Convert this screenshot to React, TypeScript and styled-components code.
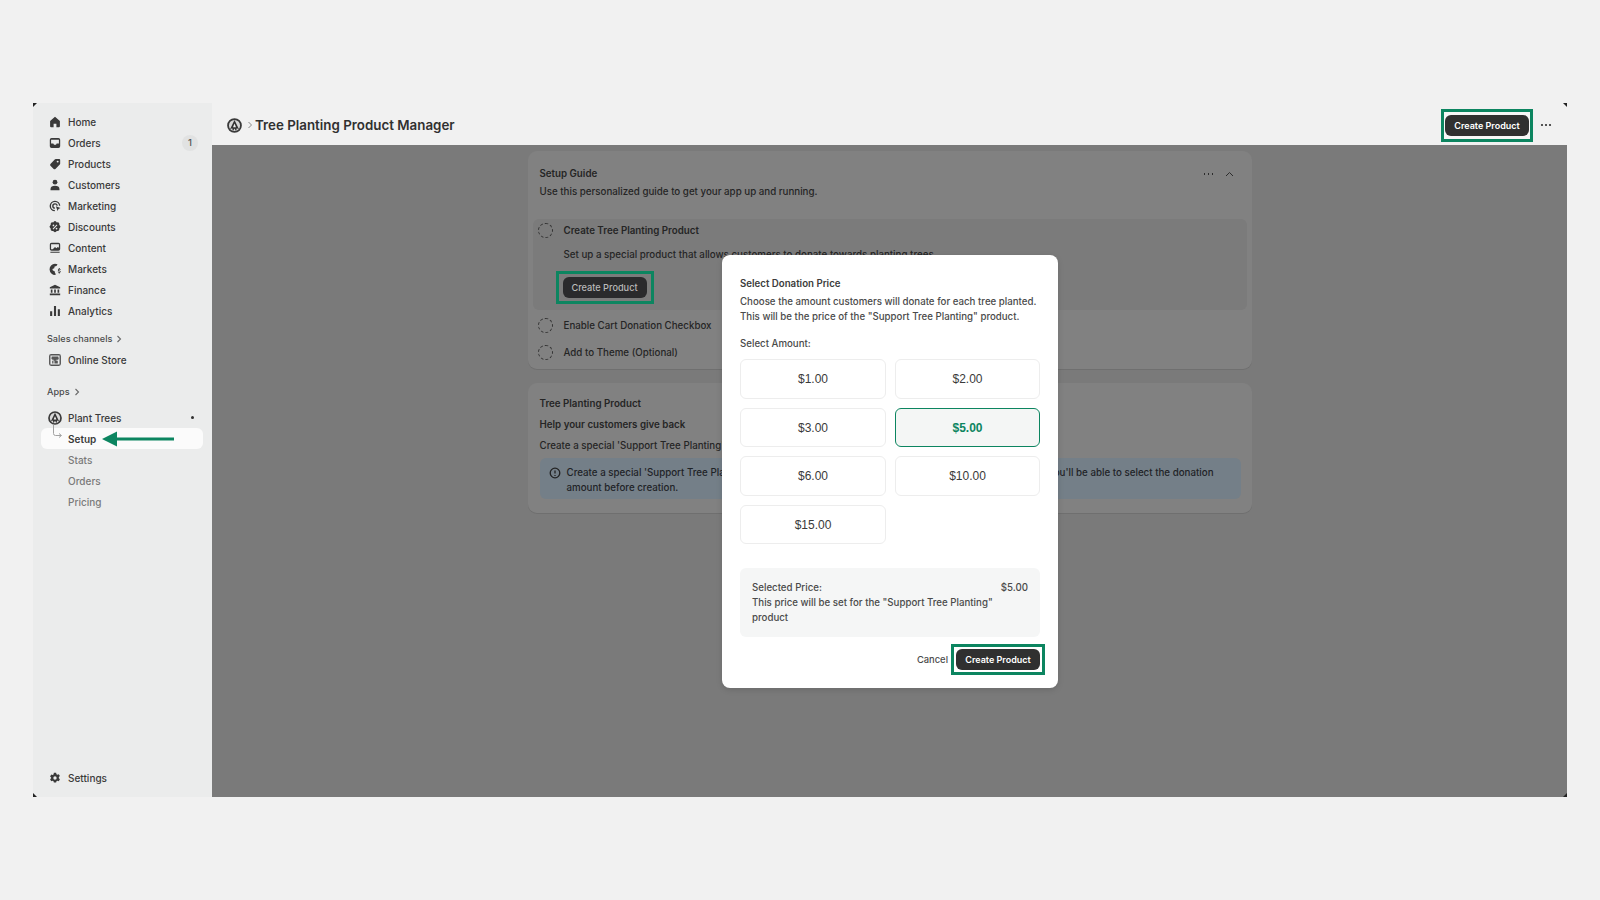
import React from "react";
import styled, { createGlobalStyle } from "styled-components";

const GREEN = "#0c8560";

const Global = createGlobalStyle`
  html, body { margin: 0; padding: 0; background: #f1f1f1; }
  body { font-family: Inter, "Liberation Sans", sans-serif; color: #303030; -webkit-font-smoothing: antialiased; }
  #root { height: 900px; overflow: hidden; }
`;

const Page = styled.div`
  box-sizing: border-box;
  height: 900px;
  padding: 103px 33px 0;
`;
const Frame = styled.div`
  position: relative;
  display: flex;
  height: 694px;
  box-shadow: inset 0 1px 0 #e4e4e4;
`;
const Corner = styled.span<{ $pos: "tl" | "tr" | "bl" | "br" }>`
  position: absolute;
  z-index: 5;
  width: 0;
  height: 0;
  ${(p) => (p.$pos[0] === "t" ? "top: 0;" : "bottom: 0;")}
  ${(p) => (p.$pos[1] === "l" ? "left: 0;" : "right: 0;")}
  border-style: solid;
  border-width: 2px;
  border-color: ${(p) =>
    p.$pos === "tl"
      ? "#222 transparent transparent #222"
      : p.$pos === "tr"
      ? "#222 #222 transparent transparent"
      : p.$pos === "bl"
      ? "transparent transparent #222 #222"
      : "transparent #222 #222 transparent"};
`;

/* ---------- Sidebar ---------- */
const Sidebar = styled.nav`
  box-sizing: border-box;
  width: 179px;
  flex: none;
  background: #ebecec;
  padding: 8px 9px 9px 8px;
  display: flex;
  flex-direction: column;
`;
const NavRow = styled.div<{ $active?: boolean; $sub?: boolean }>`
  position: relative;
  display: flex;
  align-items: center;
  gap: 6px;
  height: 21px;
  flex: none;
  padding: 0 5px 0 7px;
  border-radius: 6px;
  font-size: 10px;
  font-weight: ${(p) => (p.$active ? 600 : 500)};
  color: ${(p) => (p.$sub && !p.$active ? "#7a7a7a" : "#3a3a3a")};
  background: ${(p) => (p.$active ? "#fbfbfb" : "transparent")};
  ${(p) => (p.$sub ? "padding-left: 27px;" : "")}
`;
const NavIcon = styled.svg`
  width: 14px;
  height: 14px;
  flex: none;
  fill: #3a3a3a;
`;
const NavLabel = styled.span`
  flex: 1;
  white-space: nowrap;
`;
const Badge = styled.span`
  width: 16px;
  height: 16px;
  border-radius: 50%;
  background: #e1e2e2;
  color: #555;
  font-size: 9.5px;
  display: flex;
  align-items: center;
  justify-content: center;
`;
const PinDot = styled.span`
  width: 3px;
  height: 3px;
  border-radius: 50%;
  background: #303030;
  margin-right: 4px;
`;
const SectionLabel = styled.div<{ $top: number }>`
  display: flex;
  align-items: center;
  gap: 4px;
  height: 21px;
  flex: none;
  margin-top: ${(p) => p.$top}px;
  padding-left: 6px;
  font-size: 9.1px;
  font-weight: 500;
  color: #4a4a4a;
`;
const TinyChevron = styled.svg`
  width: 6px;
  height: 8px;
  fill: none;
  stroke: #6a6a6a;
  stroke-width: 1.1;
`;
const Connector = styled.svg`
  position: absolute;
  left: 11px;
  top: -3px;
  width: 16px;
  height: 18px;
  fill: none;
  stroke: #a2a2a2;
  stroke-width: 1;
`;
const ArrowMark = styled.svg`
  position: absolute;
  left: 61px;
  top: 3px;
  width: 73px;
  height: 16px;
`;
const AppsGap = styled.div`
  height: 5px;
  flex: none;
`;
const Push = styled.div`
  flex: 1;
`;

/* ---------- Main ---------- */
const Main = styled.main`
  flex: 1;
  min-width: 0;
  display: flex;
  flex-direction: column;
`;
const Header = styled.header`
  box-sizing: border-box;
  height: 42px;
  flex: none;
  display: flex;
  align-items: center;
  padding: 2px 15px 0 15px;
  background: #f1f1f1;
`;
const LogoSvg = styled.svg<{ $size: number }>`
  width: ${(p) => p.$size}px;
  height: ${(p) => p.$size}px;
  flex: none;
`;
const Crumb = styled.svg`
  width: 6px;
  height: 8px;
  margin: 0 2px 0 5px;
  fill: none;
  stroke: #8a8a8a;
  stroke-width: 1;
`;
const PageTitle = styled.h1`
  flex: 1;
  margin: 0;
  font-size: 13.35px;
  font-weight: 600;
  color: #303030;
  white-space: nowrap;
`;
const Highlight = styled.span<{ $px: number; $py: number; $bg?: string }>`
  display: inline-flex;
  border: 3px solid ${GREEN};
  padding: ${(p) => p.$py}px ${(p) => p.$px}px;
  background: ${(p) => p.$bg || "transparent"};
`;
const DarkButton = styled.button<{ $dim?: boolean }>`
  width: 84px;
  height: 21px;
  padding: 0;
  border: 0;
  border-radius: 6px;
  background: ${(p) => (p.$dim ? "#2a2a2c" : "#303030")};
  color: ${(p) => (p.$dim ? "#b9b9b9" : "#ffffff")};
  font: ${(p) => (p.$dim ? 500 : 600)} ${(p) => (p.$dim ? 9.2 : 9)}px Inter, sans-serif;
  white-space: nowrap;
`;
const HeaderDots = styled.svg`
  width: 12px;
  height: 4px;
  margin-left: 7px;
  fill: #303030;
`;
const Overlay = styled.div`
  position: relative;
  flex: 1;
  background: #7a7a7a;
  padding-top: 6px;
  display: flex;
  flex-direction: column;
  align-items: center;
`;
const Card = styled.section<{ $h: number; $top?: number; $pad: number }>`
  box-sizing: border-box;
  width: 724px;
  height: ${(p) => p.$h}px;
  margin-top: ${(p) => p.$top || 0}px;
  flex: none;
  background: #818181;
  border-radius: 9px;
  box-shadow: 0 1px 0 #6f6f6f;
  padding: ${(p) => p.$pad}px 12px 0;
  font-size: 9.75px;
  font-weight: 450;
  color: #252525;
`;
const CardHead = styled.div`
  display: flex;
  align-items: center;
`;
const CardTitle = styled.div<{ $top?: number }>`
  flex: 1;
  font-weight: 600;
  line-height: 18px;
  margin-top: ${(p) => p.$top || 0}px;
`;
const CardText = styled.div<{ $top?: number }>`
  line-height: 18px;
  margin-top: ${(p) => p.$top || 0}px;
  white-space: nowrap;
`;
const GuideTools = styled.svg`
  width: 42px;
  height: 10px;
  margin-right: 1px;
  fill: none;
  stroke: #2c2c2c;
`;
const StepBox = styled.div`
  margin: 18px -7px 0;
  box-sizing: border-box;
  height: 91px;
  border-radius: 6px;
  background: #7b7b7b;
  padding: 0 5px;
`;
const StepRow = styled.div<{ $outer?: boolean }>`
  display: flex;
  align-items: center;
  gap: 11px;
  height: 22px;
  font-weight: ${(p) => (p.$outer ? 500 : 600)};
  ${(p) => (p.$outer ? "margin: 0 -2px;" : "")}
`;
const StepCircle = styled.span`
  box-sizing: border-box;
  width: 15px;
  height: 15px;
  flex: none;
  border-radius: 50%;
  border: 1.2px dashed #333;
`;
const StepBody = styled.div`
  margin: 3px 0 0 26px;
  line-height: 22px;
  white-space: nowrap;
`;
const StepAction = styled.div`
  margin: 5px 0 0 18px;
`;
const Stack = styled.div`
  margin-top: 4px;
  display: flex;
  flex-direction: column;
  gap: 5px;
`;
const Banner = styled.div`
  margin-top: 3px;
  box-sizing: border-box;
  height: 41px;
  margin-right: -1px;
  border-radius: 6px;
  background: #747f88;
  padding: 8px 24px 0 9px;
  display: flex;
  gap: 6px;
  line-height: 14.6px;
  color: #1f2327;
`;
const InfoIcon = styled.svg`
  width: 12px;
  height: 12px;
  flex: none;
  margin-top: 1px;
  fill: none;
  stroke: #222;
  stroke-width: 1.3;
`;

/* ---------- Modal ---------- */
const Modal = styled.div`
  position: absolute;
  left: 510px;
  top: 110px;
  box-sizing: border-box;
  width: 336px;
  height: 433px;
  padding: 21px 18px 0;
  background: #ffffff;
  border-radius: 8px;
  font-size: 9.7px;
  font-weight: 450;
  color: #4a4a4a;
  box-shadow: 0 2px 6px rgba(0, 0, 0, 0.12);
`;
const ModalTitle = styled.div`
  font-weight: 600;
  line-height: 15px;
  color: #3c3c3c;
`;
const ModalDesc = styled.div`
  margin-top: 4px;
  line-height: 14.7px;
  white-space: nowrap;
`;
const ModalLabel = styled.div`
  margin-top: 12px;
  line-height: 15px;
`;
const AmountGrid = styled.div`
  margin-top: 8px;
  display: grid;
  grid-template-columns: 146px 145px;
  gap: 9px;
`;
const Amount = styled.button<{ $selected?: boolean }>`
  box-sizing: border-box;
  height: 39.5px;
  padding: 0;
  border-radius: 6px;
  border: ${(p) => (p.$selected ? `1.6px solid ${GREEN}` : "1px solid #ededed")};
  background: ${(p) => (p.$selected ? "#f4f6f5" : "#ffffff")};
  color: ${(p) => (p.$selected ? GREEN : "#3a3a3a")};
  font: ${(p) => (p.$selected ? 700 : 400)} 12px "Liberation Sans", Arial, sans-serif;
`;
const Summary = styled.div`
  box-sizing: border-box;
  margin-top: 24px;
  height: 69px;
  padding: 12px 12px 0;
  border-radius: 6px;
  background: #f5f6f6;
  line-height: 15px;
`;
const SummaryTop = styled.div`
  display: flex;
  justify-content: space-between;
`;
const SummaryNote = styled.div`
  width: 250px;
`;
const Footer = styled.div`
  margin: 7px -5px 0 0;
  display: flex;
  justify-content: flex-end;
  align-items: center;
  gap: 3px;
`;
const CancelLink = styled.span`
  font-weight: 500;
  font-size: 9.4px;
  color: #4a4a4a;
`;

/* ---------- Icons ---------- */
const Logo = ({ size }: { size: number }) => (
  <LogoSvg $size={size} viewBox="0 0 20 20">
    <circle cx="10" cy="10" r="8.6" fill="#d8d8d8" stroke="#3a3a3a" strokeWidth="2.4" />
    <path d="M10 2.600 16 15l-3-1.500-.8 4-2.200-3.600-2.200 3.600-.8-4L4 15z" fill="#333" />
    <path d="M10 7.400l2 4.800H8z" fill="#f0f0f0" />
  </LogoSvg>
);

const icons: Record<string, React.ReactNode> = {
  home: <path d="M10 2.600 3 8.600V16a1.400 1.400 0 0 0 1.400 1.400H8V12.600h4v4.800h3.600A1.400 1.400 0 0 0 17 16V8.600z" />,
  orders: (
    <path
      fillRule="evenodd"
      d="M5 3h10a2.400 2.400 0 0 1 2.400 2.400v9.200A2.400 2.400 0 0 1 15 17H5a2.400 2.400 0 0 1-2.400-2.400V5.400A2.400 2.400 0 0 1 5 3zm-.6 2.200v5.600h3.200l1 1.800h2.800l1-1.800h3.200V5.200z"
    />
  ),
  products: (
    <path
      fillRule="evenodd"
      d="M11 3h5a1.400 1.400 0 0 1 1.400 1.400v5a2 2 0 0 1-.6 1.400l-6.200 6.200a1.800 1.800 0 0 1-2.500 0l-4.600-4.600a1.800 1.800 0 0 1 0-2.500l6.100-6.300A2 2 0 0 1 11 3zm2.800 2.200a1.400 1.400 0 1 0 0 2.800 1.400 1.400 0 0 0 0-2.800z"
    />
  ),
  customers: (
    <>
      <circle cx="10" cy="6" r="3.400" />
      <path d="M3.600 17.400v-1.800c0-2.800 2.600-4.400 6.400-4.400s6.400 1.600 6.400 4.400v1.800z" />
    </>
  ),
  marketing: (
    <path
      fillRule="evenodd"
      d="M10 2.400a7.600 7.600 0 0 1 7.600 7.400h-1.900A5.700 5.700 0 1 0 9.800 15.700v1.900A7.600 7.600 0 0 1 10 2.400zm0 3.600a4 4 0 0 1 4 3.800h-1.900A2.100 2.100 0 1 0 9.800 12.100V14A4 4 0 0 1 10 6zm1.200 4.400 6.600 2.600-2.800 1.400-1.300 2.800z"
    />
  ),
  discounts: (
    <path
      fillRule="evenodd"
      d="M8.200 2.600a2.400 2.400 0 0 1 3.600 0l.8.8 1.100-.1a2.400 2.400 0 0 1 2.500 2.500l-.1 1.100.8.8a2.400 2.400 0 0 1 0 3.600l-.8.8.1 1.100a2.400 2.400 0 0 1-2.500 2.500l-1.100-.1-.8.8a2.400 2.400 0 0 1-3.600 0l-.8-.8-1.100.1a2.400 2.400 0 0 1-2.500-2.500l.1-1.100-.8-.8a2.400 2.400 0 0 1 0-3.600l.8-.8-.1-1.100a2.400 2.400 0 0 1 2.500-2.500l1.100.1zM12.400 6.600l-5.800 5.800 1 1 5.800-5.800zM7.800 6.600a1.200 1.200 0 1 0 0 2.400 1.200 1.200 0 0 0 0-2.400zm4.400 4.400a1.200 1.200 0 1 0 0 2.400 1.200 1.200 0 0 0 0-2.400z"
    />
  ),
  content: (
    <path
      fillRule="evenodd"
      d="M5 2.600h10A2.400 2.400 0 0 1 17.400 5v6.600A2.400 2.400 0 0 1 15 14H5a2.400 2.400 0 0 1-2.400-2.400V5A2.400 2.400 0 0 1 5 2.600zm-.6 2v7.200h2.400l3.200-3.200 2 1.800 2-2 1.600 1.400V4.600zM3.400 15.200h13.200v1.600H3.400z"
    />
  ),
  markets: (
    <path
      fillRule="evenodd"
      d="M10 2.400c1.300 0 2.500.3 3.600.9l-1.500 2.500-2.600.7-.6 2.400-2.600 1 .6 2.400 2.600.8.6 2.800 1 .8-.5 1.800A7.600 7.600 0 1 1 10 2.400zm5.400 6.200h1.400v1.200c.8.2 1.300.8 1.300 1.500h-1.300c0-.3-.3-.5-.7-.5s-.7.2-.7.5c0 .4.3.5 1 .7 1 .3 1.800.7 1.800 1.700 0 .8-.5 1.400-1.400 1.600v1.200h-1.400v-1.200c-.9-.2-1.500-.8-1.500-1.700h1.300c0 .4.4.7.9.7s.8-.2.8-.6-.4-.6-1.100-.8c-1-.3-1.700-.7-1.700-1.600 0-.7.6-1.300 1.300-1.500z"
    />
  ),
  finance: (
    <path d="M10 2.400 17.400 6v2H2.600V6zM4 9.400h2.400v4.400H4zm4.800 0h2.400v4.400H8.800zm4.800 0H16v4.400h-2.400zM2.600 15h14.800v2.400H2.600z" />
  ),
  analytics: <path d="M3 10.400h3v6.800H3zM8.500 3h3v14.200h-3zM14 7.400h3v9.800h-3z" />,
  store: (
    <path
      fillRule="evenodd"
      fill="#555"
      d="M4.500 1.500h11a3 3 0 0 1 3 3v11a3 3 0 0 1-3 3h-11a3 3 0 0 1-3-3v-11a3 3 0 0 1 3-3zM3.500 3.500v13h13v-13zM5.400 5h9.200l.8 3a1.800 1.800 0 0 1-3 1.200 2.300 2.300 0 0 1-4.800 0 1.800 1.800 0 0 1-2.800-1.200zM6 11h1.800v4H6zm3.200 0h4.800v4H9.200z"
    />
  ),
  settings: (
    <path
      fillRule="evenodd"
      d="M8.400 2.400h3.200l.5 2.100 1.300.7 2-.7 1.600 2.800-1.500 1.400v1.600l1.500 1.400-1.600 2.800-2-.7-1.300.7-.5 2.100H8.400l-.5-2.100-1.300-.7-2 .7-1.600-2.800 1.500-1.400V9.300L3 7.900l1.600-2.800 2 .7 1.300-.7zM10 7.600a2.400 2.400 0 1 0 0 4.800 2.400 2.400 0 0 0 0-4.800z"
    />
  ),
};

const Icon = ({ name }: { name: string }) => <NavIcon viewBox="0 0 20 20">{icons[name]}</NavIcon>;

const Chevron = () => (
  <TinyChevron viewBox="0 0 6 8">
    <path d="M1.500 1 4.500 4 1.500 7" />
  </TinyChevron>
);

const mainNav: [string, string][] = [
  ["home", "Home"],
  ["orders", "Orders"],
  ["products", "Products"],
  ["customers", "Customers"],
  ["marketing", "Marketing"],
  ["discounts", "Discounts"],
  ["content", "Content"],
  ["markets", "Markets"],
  ["finance", "Finance"],
  ["analytics", "Analytics"],
];

const amounts = ["$1.00", "$2.00", "$3.00", "$5.00", "$6.00", "$10.00", "$15.00"];

export default function App() {
  return (
    <>
      <Global />
      <Page>
        <Frame>
          <Corner $pos="tl" />
          <Corner $pos="tr" />
          <Corner $pos="bl" />
          <Corner $pos="br" />
          <Sidebar>
            {mainNav.map(([icon, label]) => (
              <NavRow key={label}>
                <Icon name={icon} />
                <NavLabel>{label}</NavLabel>
                {label === "Orders" && <Badge>1</Badge>}
              </NavRow>
            ))}
            <SectionLabel $top={7}>
              Sales channels <Chevron />
            </SectionLabel>
            <NavRow>
              <Icon name="store" />
              <NavLabel>Online Store</NavLabel>
            </NavRow>
            <SectionLabel $top={11}>
              Apps <Chevron />
            </SectionLabel>
            <AppsGap />
            <NavRow>
              <Logo size={14} />
              <NavLabel>Plant Trees</NavLabel>
              <PinDot />
            </NavRow>
            <NavRow $sub $active>
              <Connector viewBox="0 0 16 18">
                <path d="M1.500 0v8.500a2 2 0 0 0 2 2H9M7 8.500l2.500 2-2.500 2" />
              </Connector>
              Setup
              <ArrowMark viewBox="0 0 73 16">
                <path d="M0 8 15 .5v6h57v3H15v6z" fill={GREEN} />
              </ArrowMark>
            </NavRow>
            <NavRow $sub>Stats</NavRow>
            <NavRow $sub>Orders</NavRow>
            <NavRow $sub>Pricing</NavRow>
            <Push />
            <NavRow>
              <Icon name="settings" />
              <NavLabel>Settings</NavLabel>
            </NavRow>
          </Sidebar>
          <Main>
            <Header>
              <Logo size={15} />
              <Crumb viewBox="0 0 6 8">
                <path d="M1.500 1 4.500 4 1.500 7" />
              </Crumb>
              <PageTitle>Tree Planting Product Manager</PageTitle>
              <Highlight $px={1} $py={3} $bg="#f7f7f7">
                <DarkButton>Create Product</DarkButton>
              </Highlight>
              <HeaderDots viewBox="0 0 12 4">
                <circle cx="2" cy="2" r="1.100" />
                <circle cx="6" cy="2" r="1.100" />
                <circle cx="10" cy="2" r="1.100" />
              </HeaderDots>
            </Header>
            <Overlay>
              <Card $h={218} $pad={14}>
                <CardHead>
                  <CardTitle>Setup Guide</CardTitle>
                  <GuideTools viewBox="0 0 42 10">
                    <path d="M7 5h1M11 5h1M15 5h1" strokeWidth="1.800" />
                    <path d="M29 7l3.500-3.500L36 7" strokeWidth="1" />
                  </GuideTools>
                </CardHead>
                <CardText>Use this personalized guide to get your app up and running.</CardText>
                <StepBox>
                  <StepRow>
                    <StepCircle />
                    Create Tree Planting Product
                  </StepRow>
                  <StepBody>Set up a special product that allows customers to donate towards planting trees.</StepBody>
                  <StepAction>
                    <Highlight $px={4} $py={3}>
                      <DarkButton $dim>Create Product</DarkButton>
                    </Highlight>
                  </StepAction>
                </StepBox>
                <Stack>
                  <StepRow $outer>
                    <StepCircle />
                    Enable Cart Donation Checkbox
                  </StepRow>
                  <StepRow $outer>
                    <StepCircle />
                    Add to Theme (Optional)
                  </StepRow>
                </Stack>
              </Card>
              <Card $h={130} $top={14} $pad={12}>
                <CardTitle>Tree Planting Product</CardTitle>
                <CardTitle $top={3}>Help your customers give back</CardTitle>
                <CardText $top={3}>Create a special 'Support Tree Planting' product that customers can add to their cart.</CardText>
                <Banner>
                  <InfoIcon viewBox="0 0 12 12">
                    <circle cx="6" cy="6" r="4.800" />
                    <path d="M6 3.500v3M6 8v.9" />
                  </InfoIcon>
                  <span>
                    Create a special 'Support Tree Planting' product that customers can add to their cart at checkout. Then you'll be able to select the donation amount before creation.
                  </span>
                </Banner>
              </Card>
              <Modal>
                <ModalTitle>Select Donation Price</ModalTitle>
                <ModalDesc>
                  Choose the amount customers will donate for each tree planted.
                  <br />
                  This will be the price of the "Support Tree Planting" product.
                </ModalDesc>
                <ModalLabel>Select Amount:</ModalLabel>
                <AmountGrid>
                  {amounts.map((a) => (
                    <Amount key={a} $selected={a === "$5.00"}>
                      {a}
                    </Amount>
                  ))}
                </AmountGrid>
                <Summary>
                  <SummaryTop>
                    <span>Selected Price:</span>
                    <span>$5.00</span>
                  </SummaryTop>
                  <SummaryNote>This price will be set for the "Support Tree Planting" product</SummaryNote>
                </Summary>
                <Footer>
                  <CancelLink>Cancel</CancelLink>
                  <Highlight $px={2} $py={2}>
                    <DarkButton>Create Product</DarkButton>
                  </Highlight>
                </Footer>
              </Modal>
            </Overlay>
          </Main>
        </Frame>
      </Page>
    </>
  );
}
